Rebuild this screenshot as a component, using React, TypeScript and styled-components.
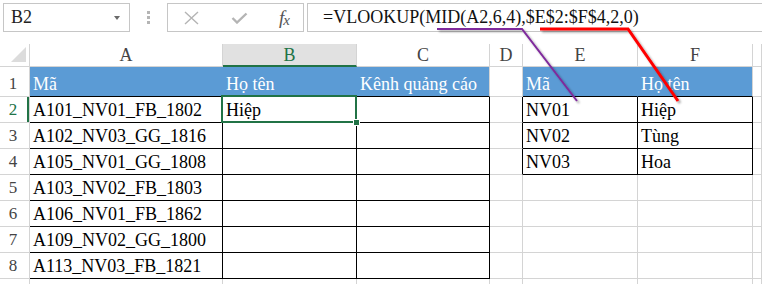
import styled, { createGlobalStyle } from 'styled-components';

const GREEN = '#217346';
const BLUE = '#5b9bd5';
const GRID = '#d4d4d4';
const BLACK = '#000';
const SERIF = `"Liberation Serif", "DejaVu Serif", serif`;

const GlobalStyle = createGlobalStyle`
  html, body {
    margin: 0;
    padding: 0;
    background: #fff;
    overflow: hidden;
  }
  body {
    width: 762px;
    height: 284px;
    font-family: "Liberation Serif", "DejaVu Serif", serif;
  }
`;

const columns = ['A', 'B', 'C', 'D', 'E', 'F', ''];

const codes = [
  'A101_NV01_FB_1802',
  'A102_NV03_GG_1816',
  'A105_NV01_GG_1808',
  'A103_NV02_FB_1803',
  'A106_NV01_FB_1862',
  'A109_NV02_GG_1800',
  'A113_NV03_FB_1821',
];

const lookup = [
  ['NV01', 'Hiệp'],
  ['NV02', 'Tùng'],
  ['NV03', 'Hoa'],
];

type CellSpec = {
  text: string;
  fill?: string;
  right: string;
  bottom: string;
  light?: boolean;
  selected?: boolean;
};

function buildRow(row: number): CellSpec[] {
  const cells: CellSpec[] = [];
  for (let c = 0; c < 7; c++) {
    let text = '';
    let fill: string | undefined;
    let right = GRID;
    let bottom = GRID;
    const inMain = c <= 2;
    const inLookup = c === 4 || c === 5;

    if (row === 1) {
      if (inMain || inLookup) {
        fill = BLUE;
        bottom = BLACK;
        right = c === 2 || c === 5 ? GRID : BLUE;
        text = ['Mã', 'Họ tên', 'Kênh quảng cáo', '', 'Mã', 'Họ tên'][c];
      }
    } else {
      if (inMain && row <= 8) {
        right = BLACK;
        bottom = BLACK;
        if (c === 0) text = codes[row - 2];
        if (c === 1 && row === 2) text = 'Hiệp';
      }
      if (row <= 4) {
        if (c === 3) right = BLACK;
        if (inLookup) {
          right = BLACK;
          bottom = BLACK;
          text = lookup[row - 2][c - 4];
        }
      }
    }
    cells.push({
      text,
      fill,
      right,
      bottom,
      light: row === 1,
      selected: row === 2 && c === 1,
    });
  }
  return cells;
}

// row 9 only peeks in at the bottom edge, its number stays hidden below
const rows = [1, 2, 3, 4, 5, 6, 7, 8, 9];

export default function App() {
  return (
    <Page>
      <GlobalStyle />
      <Toolbar>
        <NameBox>
          <span>B2</span>
          <DropArrow />
        </NameBox>
        <Grip>
          <i />
          <i />
          <i />
        </Grip>
        <FxGroup>
          <svg width="15" height="14" viewBox="0 0 15 14">
            <path d="M1 1 L14 13 M14 1 L1 13" stroke="#b4b4b4" strokeWidth="1.4" fill="none" />
          </svg>
          <svg width="17" height="12" viewBox="0 0 17 12">
            <path d="M1.5 6 L6 10.5 L15.5 1.5" stroke="#b4b4b4" strokeWidth="2.4" fill="none" />
          </svg>
          <FxLabel>
            f<sub>x</sub>
          </FxLabel>
        </FxGroup>
        <FormulaInput>=VLOOKUP(MID(A2,6,4),$E$2:$F$4,2,0)</FormulaInput>
      </Toolbar>

      <Sheet>
        <Corner>
          <svg width="15" height="15" viewBox="0 0 15 15">
            <path d="M15 0 L15 15 L0 15 Z" fill="#dcdcdc" />
          </svg>
        </Corner>
        {columns.map((col) => (
          <ColHeader key={col || 'G'} $active={col === 'B'}>
            {col}
          </ColHeader>
        ))}

        {rows.map((row) => (
          <Row key={row} row={row} />
        ))}
      </Sheet>

      <Annotations width="762" height="284" viewBox="0 0 762 284">
        <defs>
          <filter id="shade" x="-20%" y="-20%" width="140%" height="140%">
            <feDropShadow dx="2" dy="2" stdDeviation="1.2" floodColor="#000" floodOpacity="0.35" />
          </filter>
        </defs>
        <polyline
          points="437,29 522,29 577,101"
          stroke="#7f2a9c"
          strokeWidth="2"
          fill="none"
          filter="url(#shade)"
        />
        <polyline
          points="540,29 628,29 678,101"
          stroke="#ff0000"
          strokeWidth="3"
          fill="none"
          filter="url(#shade)"
        />
      </Annotations>
    </Page>
  );
}

function Row({ row }: { row: number }) {
  const cells = buildRow(row);
  return (
    <>
      <RowHeader $active={row === 2}>{row < 9 ? row : ''}</RowHeader>
      {cells.map((cell, i) => (
        <Cell
          key={i}
          $fill={cell.fill}
          $right={cell.right}
          $bottom={cell.bottom}
          $light={cell.light}
          $selected={cell.selected}
        >
          {cell.text}
        </Cell>
      ))}
    </>
  );
}

const Page = styled.div`
  position: relative;
  width: 762px;
  height: 284px;
  overflow: hidden;
  background: #fff;
  font-family: ${SERIF};
`;

const Toolbar = styled.div`
  display: flex;
  align-items: center;
  height: 29px;
  padding: 3px 0 0 3px;
  margin-bottom: 12px;
`;

const Box = styled.div`
  box-sizing: border-box;
  height: 29px;
  border: 1px solid #c6c6c6;
  background: #fff;
  display: flex;
  align-items: center;
`;

const NameBox = styled(Box)`
  width: 127px;
  padding: 0 9px 0 7px;
  justify-content: space-between;
  font-size: 18px;
  color: #222;
`;

const DropArrow = styled.span`
  width: 0;
  height: 0;
  border-left: 3.5px solid transparent;
  border-right: 3.5px solid transparent;
  border-top: 4px solid #6a6a6a;
  margin-top: 1px;
`;

const Grip = styled.div`
  width: 37px;
  display: flex;
  flex-direction: column;
  align-items: center;
  gap: 2px;

  i {
    display: block;
    width: 3px;
    height: 3px;
    background: #b5b5b5;
  }
`;

const FxGroup = styled(Box)`
  width: 137px;
  padding: 0 14px 0 16px;
  justify-content: space-between;
`;

const FxLabel = styled.span`
  font-style: italic;
  font-size: 19px;
  color: #555;
  letter-spacing: -1px;

  sub {
    font-size: 15px;
    vertical-align: -1px;
  }
`;

const FormulaInput = styled(Box)`
  flex: 1;
  margin-left: 3px;
  border-right: none;
  padding-left: 15px;
  font-size: 18px;
  color: #111;
  white-space: nowrap;
`;

const Sheet = styled.div`
  display: grid;
  grid-template-columns: 30px 193px 134px 133px 33px 115px 115px 1fr;
  grid-template-rows: 23px 30px repeat(8, 26px);
`;

const Corner = styled.div`
  box-sizing: border-box;
  border-right: 1px solid ${GRID};
  border-bottom: 1px solid ${GRID};
  display: flex;
  align-items: flex-end;
  justify-content: flex-end;
  padding: 0 3px 4px 0;
`;

const ColHeader = styled.div<{ $active?: boolean }>`
  box-sizing: border-box;
  display: flex;
  align-items: center;
  justify-content: center;
  font-size: 18px;
  color: ${(p) => (p.$active ? GREEN : '#444')};
  background: ${(p) => (p.$active ? '#e1e1e1' : '#fff')};
  border-right: 1px solid ${GRID};
  border-bottom: ${(p) => (p.$active ? `2px solid ${GREEN}` : `1px solid ${GRID}`)};
  padding-top: 1px;
`;

const RowHeader = styled.div<{ $active?: boolean }>`
  box-sizing: border-box;
  display: flex;
  align-items: flex-end;
  justify-content: center;
  padding: 0 3px 2px 0;
  font-size: 17px;
  line-height: 20px;
  color: ${(p) => (p.$active ? GREEN : '#444')};
  border-right: 1px solid ${GRID};
  border-bottom: 1px solid ${GRID};
  box-shadow: ${(p) => (p.$active ? `inset -2px 0 0 ${GREEN}` : 'none')};
`;

const Cell = styled.div<{
  $fill?: string;
  $right: string;
  $bottom: string;
  $light?: boolean;
  $selected?: boolean;
}>`
  position: relative;
  box-sizing: border-box;
  display: flex;
  align-items: flex-end;
  padding: 0 0 2px 3px;
  font-size: 18px;
  line-height: 20px;
  white-space: nowrap;
  color: ${(p) => (p.$light ? '#fff' : '#000')};
  background: ${(p) => p.$fill ?? '#fff'};
  border-right: 1px solid ${(p) => p.$right};
  border-bottom: 1px solid ${(p) => p.$bottom};
  z-index: ${(p) => (p.$selected ? 1 : 0)};

  ${(p) =>
    p.$selected &&
    `
    &::before {
      content: '';
      position: absolute;
      top: -2px;
      left: -2px;
      right: -1px;
      bottom: -1px;
      border: 2px solid ${GREEN};
    }
    &::after {
      content: '';
      position: absolute;
      right: -4px;
      bottom: -4px;
      width: 5px;
      height: 5px;
      background: ${GREEN};
      border: 1px solid #fff;
    }
  `}
`;

const Annotations = styled.svg`
  position: absolute;
  top: 0;
  left: 0;
  pointer-events: none;
  z-index: 2;
`;
